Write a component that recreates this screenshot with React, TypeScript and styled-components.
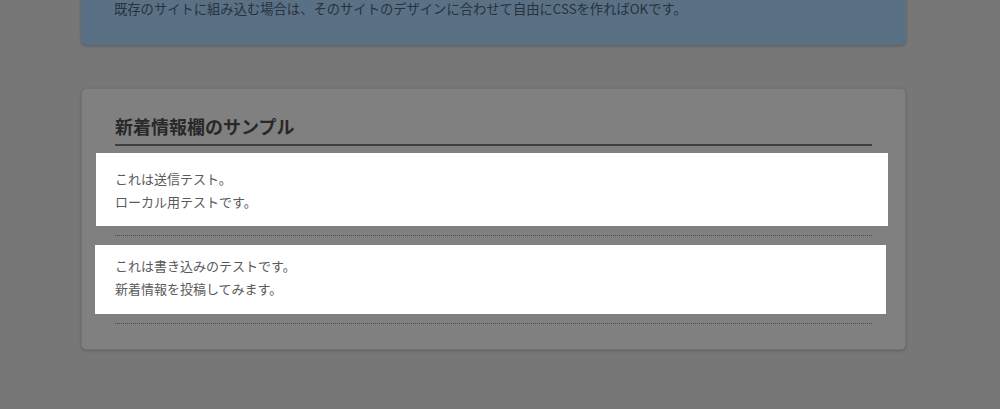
import * as React from 'react';
import styled, { createGlobalStyle } from 'styled-components';

const NEWS = [
  { id: 1, lines: ['これは送信テスト。', 'ローカル用テストです。'], pad: '14px 19px 13px', left: 19, right: 16 },
  { id: 2, lines: ['これは書き込みのテストです。', '新着情報を投稿してみます。'], pad: '9px 19px 14px', left: 20, right: 14 },
];

const App: React.FC = () => {
  return (
    <>
      <GlobalStyle />
      <Page>
        <Notice>既存のサイトに組み込む場合は、そのサイトのデザインに合わせて自由にCSSを作ればOKです。</Notice>
        <Panel>
          <Heading>新着情報欄のサンプル</Heading>
          <List>
            {NEWS.map((item) => (
              <Item key={item.id}>
                <Body pad={item.pad} left={item.left} right={item.right}>
                  {item.lines.map((line) => (
                    <Line key={line}>{line}</Line>
                  ))}
                </Body>
              </Item>
            ))}
          </List>
        </Panel>
      </Page>
    </>
  );
};

interface BodyIF {
  pad: string;
  left: number;
  right: number;
}

const GlobalStyle = createGlobalStyle`
  html, body {
    margin: 0;
    padding: 0;
    background: #777777;
    overflow: hidden;
  }
  body {
    font-family: "Noto Sans CJK JP", "Noto Sans", sans-serif;
  }
`;

const Page = styled.div`
  display: flex;
  flex-direction: column;
  gap: 43px;
  width: 825px;
  margin: 0 0 0 81px;
  height: 409px;
`;

const Notice = styled.div`
  margin-top: -20px;
  padding: 20px 33px 28px;
  background-color: #5a7085;
  border-radius: 0 0 5px 5px;
  box-shadow: 0 1px 3px rgba(0, 0, 0, 0.25);
  color: #27323d;
  font-size: 13.3px;
  line-height: 17px;
`;

const Panel = styled.section`
  padding: 24px 33px 25px;
  background-color: #808080;
  border-radius: 5px;
  border: 1px solid #727272;
  box-shadow: 0 1px 3px rgba(0, 0, 0, 0.2);
  box-sizing: border-box;
`;

const Heading = styled.h2`
  margin: 0 0 7px;
  padding: 0 0 4px;
  border-bottom: 2px solid #3f3f3f;
  color: #282828;
  font-size: 18px;
  font-weight: bold;
  line-height: 27px;
`;

const List = styled.ul`
  display: flex;
  flex-direction: column;
  gap: 9px;
  margin: 0;
  padding: 0;
  list-style: none;
`;

const Item = styled.li`
  padding-bottom: 9px;
  border-bottom: 1px dotted #4a4a4a;
`;

const Body = styled.div<BodyIF>`
  margin: 0 -${(props) => props.right}px 0 -${(props) => props.left}px;
  padding: ${(props) => props.pad};
  padding-left: ${(props) => props.left}px;
  background-color: #ffffff;
  color: #5a5a5a;
  font-size: 13px;
  line-height: 23px;
`;

const Line = styled.p`
  margin: 0;
`;

export default App;
